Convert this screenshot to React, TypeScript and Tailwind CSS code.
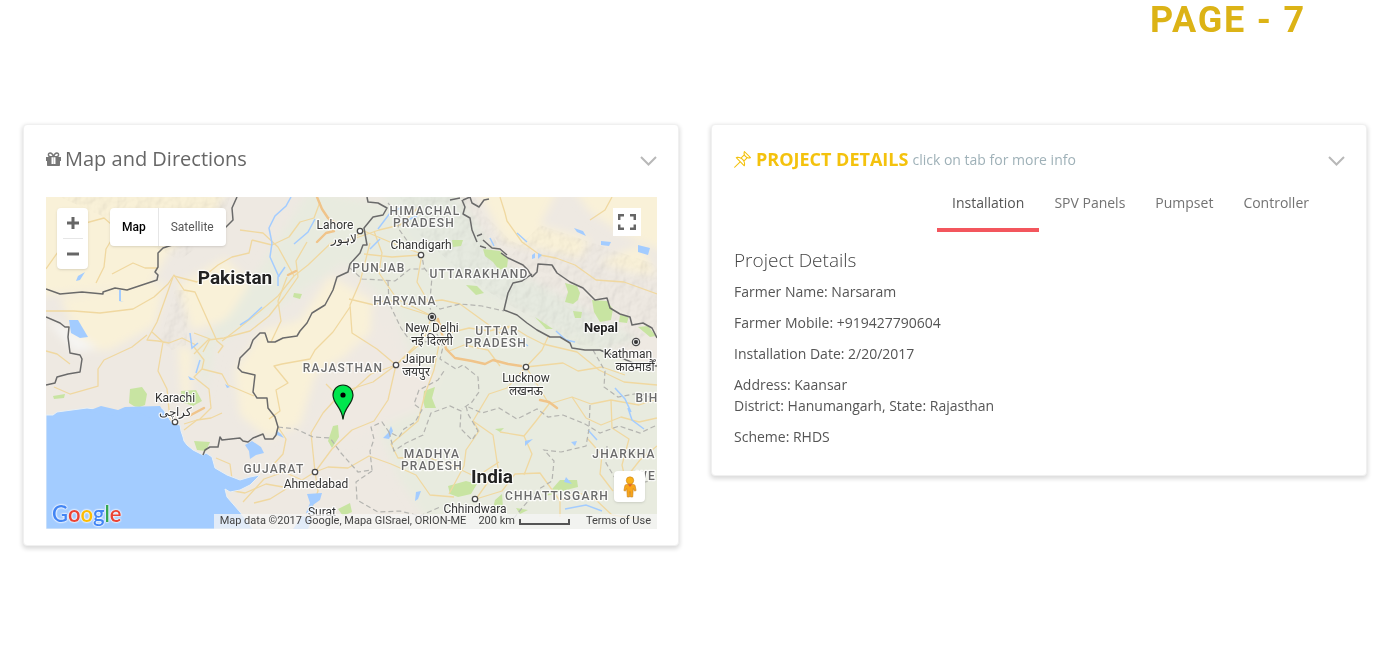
import { useState, type ReactNode } from "react";
import { SlPin } from "react-icons/sl";

const TABS = ["Installation", "SPV Panels", "Pumpset", "Controller"];

const SEA =
  "M46 415L53 415L57 412L72 410L87 408L102 410L117 412L126 411L133 407L163 409L172 423L180 425L181 431L183 437L184 441L187 445L193 450L203 455L206 453L212 457L215 468L227 475L240 480L250 477L260 475L250 485L240 490L230 492L225 489L227 497L240 512L253 529L46 529Z";

const BORDERS = [
  // Afghanistan
  "M46 289L60 294L82 292L103 294L103 292L115 288L127 290L142 285L157 280L158 275L155 272L158 267L158 253L163 248L225 228L233 220L232 208L237 197",
  // Iran
  "M46 317L60 323L65 327L69 327L68 337L70 353L80 355L82 359L80 372L68 374L57 377L55 383L46 385",
  // Pakistan and India
  "M203 455L205 450L210 447L218 447L220 437L222 440L240 438L243 441L248 442L253 438L263 434L265 439L273 439L276 435L278 427L275 417L268 408L267 398L257 398L253 392L255 375L242 372L238 368L240 358L250 348L253 340L260 333L265 333L268 342L275 342L283 338L297 336L300 331L307 323L312 313L325 305L333 290L337 277L348 272L350 264L360 253L363 245L367 245L364 228L373 217L383 215L387 208L378 203L368 202L367 197",
  // Tibet
  "M462 200L465 207L463 214L470 218L472 230L477 242M450 200L460 198M463 200L470 197L472 203L479 207L484 200L489 199",
  "M477 236L482 234M480 246L486 248M483 240L492 248L500 249L507 255M501 253L508 258L523 265L528 270L532 277",
  // Nepal
  "M532 277L537 272L538 264L552 265L557 273L570 282L583 288L595 300L607 298L610 308L620 314L630 317L632 325L643 323L652 328L657 338",
  "M532 274L522 281L513 283L508 293L504 310L517 315L527 323L537 330L550 337L560 337L570 343L572 348L585 350L600 350L607 353L620 357L635 364L657 366",
];

const STATE_LINES = [
  "M388 203L400 217L398 228L408 242L421 250L424 268L432 277L430 300L440 309L460 304L482 306L504 311",
  "M350 268L362 279L381 280L395 281L410 269L424 269",
  "M388 281L389 303L401 328L408 338L419 343L430 341L437 332L434 318L430 308",
  "M437 334L443 347L440 359L456 369L463 365L478 377L479 392L472 402L462 409",
  "M278 427L296 429L313 437L330 438L341 453L358 472L372 470L370 451L374 439L371 427L382 422L389 432L399 437L404 429L415 422L422 410L414 404L419 390L438 380L444 371",
  "M389 432L394 451L406 443L423 435L431 413L450 406L461 411L460 428L472 440L478 431L468 414L466 406L482 413L499 408L517 419L537 409L548 417L563 415L585 424L600 433L619 426L640 433L657 425",
  "M593 350L605 371L604 387L618 397L640 393L657 400M590 405L589 429L586 446L561 452L544 450L554 461L552 481L539 489L522 508L514 518",
  "M372 471L356 482L357 500L378 512L400 511L420 516L440 507M607 446L606 463L615 478L633 485L657 479",
];

const ROADS = [
  "M46 311L74 311L100 313L133 309L154 297L168 284L174 275L184 290L195 292L217 341L223 346L218 353",
  "M173 277L157 322L147 340L158 341L169 343L182 338L196 345M152 332L163 342L158 371L167 389L170 420",
  "M147 335L132 347L104 360L98 369L98 386L70 394L54 387",
  "M46 351L57 354L70 364",
  "M222 341L239 328L259 312L278 296L294 276L308 265L330 244L350 240L364 231",
  "M194 354L208 340L224 338L250 331L269 316L284 297L298 277L296 261L307 242",
  "M194 347L204 360L202 369L194 377L209 389L211 408L200 419L184 424",
  "M203 352L210 339L194 333M202 369L222 374L228 385L254 396",
  "M46 269L60 249L74 238L82 224L104 218L111 224M96 283L104 267L106 249L118 229",
  "M112 274L133 263L145 268L158 268M174 276L197 282L218 265L232 257L249 253L252 240",
  "M252 240L272 245L289 237L300 222L314 218L320 202M240 230L263 233L278 247L294 276",
  "M350 240L379 230L400 225L419 207M364 231L397 245L422 254L417 282L430 305M364 254L392 257L420 255M374 231L382 253L379 273L397 299L432 316",
  "M370 243L360 282L350 305L352 333L377 349L396 365M432 316L403 307L388 299L374 305L349 299",
  "M287 277L278 301L281 321L271 342M333 332L350 307M333 332L315 350L310 359L282 364L274 366L288 383L276 390L280 411L269 419M326 384L338 396L350 393L371 374L396 365",
  "M432 317L420 344L396 365L388 400L374 421L352 430L332 449L315 472M396 365L411 350L431 330M396 365L373 382L342 392L323 413L311 433L315 472",
  "M315 472L302 480L284 472L264 479L243 502M315 472L328 467L348 468L369 456L391 464L416 475L430 495L454 497M315 472L318 491L311 510L306 526M286 489L270 499L254 503",
  "M278 427L286 439L283 454L272 466M184 430L197 420L211 418L222 413M216 458L230 464L232 479M228 490L245 493L266 484L283 487",
  "M432 316L449 333L469 328L489 331L511 326L527 336L543 344L577 352L599 370L624 382L657 385",
  "M440 339L434 370L425 394L418 421L391 444L398 458L426 457L449 464L476 477L499 462",
  "M526 367L507 388L489 394L473 421L479 431L466 450L464 466L449 494M473 421L493 435L498 468L476 499M526 367L540 389L549 404L572 397L591 404L611 400L639 405L657 399",
  "M549 404L536 421L524 436L500 432M572 397L586 418L601 425L621 417L639 422L657 418M611 400L612 428L629 439L622 465L628 491M560 501L577 492L596 500L612 515L640 519",
  "M476 499L502 491L515 474L540 473L560 501L560 517M524 436L532 454L524 475M587 438L602 455L600 474L613 491M657 446L640 460L629 474",
  "M500 366L488 350L464 345L449 351L440 341M526 367L542 350L548 337M526 367L563 363L578 371L602 367L625 375M424 302L442 300L460 304L482 320L500 333L511 326",
  "M500 197L505 213L507 221L522 242L540 255L556 258L575 265L596 280L624 282L657 294M612 197L605 210L590 220",
];

const LAKES = [
  "M69 320L78 320L88 337L80 338L71 333Z",
  "M574 228L583 231L586 236L577 232Z",
  "M601 241L611 242L609 246L601 245Z",
  "M638 245L650 248L648 255L638 252Z",
  "M532 255L535 253L535 258L532 259ZM538 253L542 255L538 259Z",
  "M78 276L85 272L80 280L76 281ZM119 290L121 290L121 301L124 302L119 301Z",
  "M88 411L101 406L118 410L125 407L160 406L163 411L151 418L135 411L115 416Z",
  "M245 445L252 441L261 447L264 453L256 455L250 459L249 451Z",
  "M307 494L322 493L320 500L313 505L315 514L306 513L310 503Z",
  "M391 426L393 431L389 439L383 438L388 433Z",
  "M276 430L281 434L284 438L277 435Z",
  "M525 441L533 439L525 446ZM571 442L577 441L575 446ZM566 477L572 484L564 482Z",
  "M416 492L421 491L418 499L415 501ZM188 376L195 380L190 380ZM225 384L230 387L227 388Z",
];

const RIVERS = [
  "M291 197L286 206L275 216L269 228L272 243L270 257L279 277M262 307L248 320L240 325M190 333L192 348L198 343M200 360L196 373",
  "M315 219L308 232L294 244M378 229L390 213L402 207M370 249L380 239M403 222L417 216M490 238L494 246M527 242L517 233",
  "M278 286L278 277L285 267M556 331L566 340L575 342M615 388L625 399L631 412M520 340L528 346M628 408L632 420L644 429M588 430L597 440M565 509L586 505L602 511",
];

const FORESTS = [
  "M565 283L577 286L580 293L578 300L573 304L565 302L568 292Z",
  "M592 300L607 301L613 309L611 320L600 322L594 312Z",
  "M483 249L500 251L508 259L507 267L499 270L493 262L485 256ZM452 240L463 240L461 246L453 247Z",
  "M130 389L142 387L147 394L145 405L137 408L129 403ZM53 396L65 394L64 398L54 399Z",
  "M424 391L435 387L432 398L436 408L425 408L423 401Z",
  "M194 441L210 442L206 451L197 450ZM181 391L196 390L202 401L193 406L182 402Z",
  "M448 486L466 481L477 484L471 494L458 497L450 494ZM495 429L504 428L500 432ZM495 500L502 494L503 508L492 512Z",
  "M333 426L338 425L339 437L332 448L328 441ZM466 285L477 286L484 293L476 295ZM535 317L553 329L546 329Z",
  "M560 480L577 480L578 487L566 490L546 496ZM573 311L582 312L581 318L575 318ZM620 315L629 316L627 323L619 322Z",
  "M638 327L648 326L656 336L650 337ZM338 509L350 503L352 512L343 516ZM294 293L302 294L300 299L293 297ZM516 508L528 510L520 514Z",
];

type Place = { name: string; x: number; y: number };

const STATES: Place[] = [
  { name: "HIMACHAL", x: 425, y: 215 },
  { name: "PRADESH", x: 424, y: 227 },
  { name: "PUNJAB", x: 379, y: 272 },
  { name: "UTTARAKHAND", x: 479, y: 278 },
  { name: "HARYANA", x: 405, y: 305 },
  { name: "UTTAR", x: 497, y: 335 },
  { name: "PRADESH", x: 496, y: 347 },
  { name: "RAJASTHAN", x: 343, y: 372 },
  { name: "MADHYA", x: 432, y: 458 },
  { name: "PRADESH", x: 432, y: 470 },
  { name: "GUJARAT", x: 274, y: 473 },
  { name: "CHHATTISGARH", x: 557, y: 500 },
  { name: "BIH", x: 647, y: 402 },
  { name: "JHARKHA", x: 624, y: 458 },
  { name: "WE", x: 646, y: 480 },
];

const CITIES: Place[] = [
  { name: "Lahore", x: 335, y: 229 },
  { name: "لاہور", x: 344, y: 243 },
  { name: "Chandigarh", x: 421, y: 249 },
  { name: "New Delhi", x: 432, y: 332 },
  { name: "नई दिल्ली", x: 432, y: 345 },
  { name: "Jaipur", x: 419, y: 363 },
  { name: "जयपुर", x: 416, y: 376 },
  { name: "Lucknow", x: 526, y: 382 },
  { name: "लखनऊ", x: 526, y: 395 },
  { name: "Kathman", x: 628, y: 358 },
  { name: "काठमाडौँ", x: 635, y: 371 },
  { name: "Karachi", x: 175, y: 402 },
  { name: "کراچی", x: 175, y: 416 },
  { name: "Ahmedabad", x: 316, y: 488 },
  { name: "Surat", x: 322, y: 516 },
  { name: "Chhindwara", x: 475, y: 513 },
];

const COUNTRIES: Place[] = [
  { name: "Pakistan", x: 235, y: 284 },
  { name: "India", x: 492, y: 483 },
];

const TOWN_DOTS = [
  [360, 231],
  [421, 255],
  [396, 365],
  [526, 367],
  [175, 422],
  [315, 472],
  [475, 499],
];

const CAPITAL_DOTS = [
  [432, 317],
  [636, 342],
];

function MapDrawing() {
  return (
    <svg
      className="block h-full w-full font-[Roboto,'Noto_Sans',sans-serif]"
      viewBox="46 197 611 332"
      preserveAspectRatio="xMidYMid slice"
      role="img"
      aria-label="Map"
    >
      <defs>
        <filter id="soft" x="-20%" y="-20%" width="140%" height="140%">
          <feGaussianBlur stdDeviation="4" />
        </filter>
        <filter id="relief" x="0" y="0" width="100%" height="100%">
          <feTurbulence type="fractalNoise" baseFrequency="0.09 0.07" numOctaves="3" seed="4" />
          <feDiffuseLighting surfaceScale="3" lightingColor="#ffffff" result="light">
            <feDistantLight azimuth="225" elevation="60" />
          </feDiffuseLighting>
          <feComposite in="light" in2="SourceGraphic" operator="in" />
        </filter>
      </defs>
      <rect x="46" y="197" width="611" height="332" fill="#eee9e2" />

      <g filter="url(#soft)" style={{ colorInterpolationFilters: "sRGB" }}>
        <path fill="#f9f1d8" d="M30 180H230L215 215L170 250L150 285L30 296Z" />
        <path fill="#f9f1d8" d="M60 298L165 282L155 325L110 350L85 350Z" />
        <path fill="#f9f1d8" d="M178 285L225 258L262 295L235 318L192 330ZM178 345L192 350L190 400L182 398Z" />
        <path fill="#f9f1d8" d="M262 330L300 320L330 276L372 300L370 340L315 375L300 425L268 438L240 415L235 370Z" />
        <path fill="#e8ebdf" d="M310 190L385 205L430 255L510 310L670 375V540H440L400 480L380 430L420 380L395 310L345 262L262 318L215 345L205 395L194 345L230 315Z" />
        <path fill="#f9f1d8" d="M475 185H560L540 225L590 240L580 258L505 242Z" />
        <path fill="#f9f1d8" d="M570 185H670V255L620 232L590 212ZM600 262L640 245L657 275L630 272Z" />
        <path fill="#f6f5f3" d="M46 319L66 327L98 348L75 352Z" />
        <path fill="#e6eae0" d="M380 190H455L500 262L540 285L640 340L600 348L520 312L470 285L410 240Z" />
        <path fill="#efe9e2" d="M350 350L385 320L400 360L440 372L420 410L350 440L310 430Z" />
      </g>

      <g className="mix-blend-multiply" opacity="0.18" filter="url(#relief)">
        <path d="M400 197H475L500 250L530 278L555 275L600 305L650 330L630 350L580 345L510 305L470 280L420 235Z" />
        <path d="M505 262L540 225L657 265V330L610 305L570 280ZM475 205L510 240L540 255L500 245Z" />
        <path d="M60 197H230L220 230L180 260L150 245L100 215ZM175 290L190 290L186 345L172 350L160 340Z" />
      </g>

      <g fill="#c8e4a2">
        {FORESTS.map((d) => (
          <path key={d} d={d} />
        ))}
      </g>
      <g fill="none" stroke="#f0d8a0" strokeWidth="1.3" strokeLinejoin="round">
        {ROADS.map((d) => (
          <path key={d} d={d} />
        ))}
      </g>
      <g fill="none" stroke="#f0c48a" strokeWidth="2.4" strokeLinecap="round" strokeLinejoin="round">
        <path d="M438 319L446 349L455 358L472 361L485 364L493 360L508 364L521 366" />
        <path d="M317 197L322 209L328 218L338 225M317 242L326 233L334 231M288 275L296 271" />
        <path d="M540 400L549 402L557 408M189 416L204 408" />
      </g>
      <path d={SEA} fill="#a3ccff" stroke="#e9f0f5" strokeWidth="1" />
      <path d="M293 529L302 516L312 518L308 529Z" fill="#a3ccff" />
      <g fill="#a3ccff">
        {LAKES.map((d) => (
          <path key={d} d={d} />
        ))}
      </g>
      <g fill="none" stroke="#a3ccff" strokeWidth="1.5">
        {RIVERS.map((d) => (
          <path key={d} d={d} />
        ))}
      </g>
      <g fill="none" stroke="#b4b4b0" strokeWidth="1.2" strokeDasharray="5 3">
        {STATE_LINES.map((d) => (
          <path key={d} d={d} />
        ))}
      </g>
      <g fill="none" stroke="#6a6a6a" strokeWidth="1.5" strokeLinejoin="round">
        {BORDERS.map((d) => (
          <path key={d} d={d} />
        ))}
      </g>

      <g fill="#fff" stroke="#4a4a4a" strokeWidth="1.3">
        {TOWN_DOTS.map(([x, y]) => (
          <circle key={x} cx={x} cy={y} r="2.7" />
        ))}
        {CAPITAL_DOTS.map(([x, y]) => (
          <g key={x}>
            <circle cx={x} cy={y} r="3.6" />
            <circle cx={x} cy={y} r="1.5" fill="#222" />
          </g>
        ))}
      </g>

      <g textAnchor="middle" stroke="#fff" strokeOpacity="0.85" strokeWidth="2.5" paintOrder="stroke" strokeLinejoin="round">
        <g className="text-[12px] font-medium tracking-widest" fill="#6b6b6b">
          {STATES.map((s) => (
            <text key={s.name + s.y} x={s.x} y={s.y}>
              {s.name}
            </text>
          ))}
        </g>
        <g className="text-[12px]" fill="#333">
          {CITIES.map((c) => (
            <text key={c.name} x={c.x} y={c.y}>
              {c.name}
            </text>
          ))}
        </g>
        <g className="text-[19px] font-bold" fill="#222">
          {COUNTRIES.map((c) => (
            <text key={c.name} x={c.x} y={c.y}>
              {c.name}
            </text>
          ))}
        </g>
        <text className="text-[13px] font-bold" fill="#222" x="601" y="332">
          Nepal
        </text>
      </g>

      <path
        d="M343 419.5C342 407 333 404 333 395A10 10 0 0 1 353 395C353 404 344 407 343 419.5Z"
        fill="#00e64d"
        stroke="#0b2b12"
        strokeWidth="1.2"
      />
      <circle cx="343" cy="395" r="2.6" fill="#000" />
    </svg>
  );
}

function GiftIcon() {
  return (
    <svg className="h-[14px] w-[15px]" viewBox="0 0 15 14" aria-hidden="true">
      <path
        d="M7.5 4.6C6.6 2 5.5 1 4.2 1a1.8 1.8 0 0 0 0 3.6zM7.5 4.6C8.4 2 9.5 1 10.8 1a1.8 1.8 0 0 1 0 3.6z"
        fill="none"
        stroke="#777"
        strokeWidth="1.4"
      />
      <path fill="#777" d="M0 5h5.5v7H9.500V5H15v4h-1v4c0 .6-.4 1-1 1H2c-.6 0-1-.4-1-1V9H0z" />
      <path fill="#777" d="M7 5h1v7H7z" opacity="0.3" />
    </svg>
  );
}

function Card({ title, children }: { title: ReactNode; children: ReactNode }) {
  return (
    <section className="rounded-sm border border-[#f0f0f0] bg-white pt-[9px] pr-[21px] pb-4 pl-[22px] shadow-[0_2px_4px_1px_rgba(0,0,0,0.14)]">
      <header className="flex h-[50px] items-center justify-between">
        {title}
        <button type="button" aria-label="Collapse" className="mt-1 cursor-pointer">
          <svg className="h-3 w-[17px]" viewBox="0 0 17 12" fill="none" stroke="#b8b8b8" strokeWidth="2">
            <path d="M1 2L8.5 9.5L16 2" />
          </svg>
        </button>
      </header>
      {children}
    </section>
  );
}

function MapCard() {
  return (
    <Card
      title={
        <h2 className="flex items-center gap-1 text-[20px] text-[#666]">
          <GiftIcon />
          Map and Directions
        </h2>
      }
    >
      <div className="relative mt-[13px] h-[332px] overflow-hidden font-[Roboto,sans-serif]">
        <MapDrawing />

        <div className="absolute top-[11px] left-[11px] flex w-[31px] flex-col items-center rounded-sm bg-white shadow">
          <button type="button" aria-label="Zoom in" className="flex h-[30px] w-full items-center justify-center">
            <svg className="size-3" viewBox="0 0 12 12" stroke="#666" strokeWidth="3">
              <path d="M0 6H12M6 0V12" />
            </svg>
          </button>
          <span className="h-px w-5 bg-[#e6e6e6]" />
          <button type="button" aria-label="Zoom out" className="flex h-[30px] w-full items-center justify-center">
            <svg className="size-3" viewBox="0 0 12 12" stroke="#666" strokeWidth="3">
              <path d="M0 6H12" />
            </svg>
          </button>
        </div>

        <div className="absolute top-[11px] left-16 flex h-[38px] rounded-sm bg-white text-[12px] shadow">
          <button type="button" className="border-r border-[#e6e6e6] px-3 font-medium text-black">
            Map
          </button>
          <button type="button" className="px-3 text-[#565656]">
            Satellite
          </button>
        </div>

        <button
          type="button"
          aria-label="Toggle fullscreen"
          className="absolute top-[11px] right-4 flex size-7 items-center justify-center bg-white"
        >
          <svg className="h-4 w-[18px]" viewBox="0 0 18 16" fill="none" stroke="#666" strokeWidth="2.5">
            <path d="M1.2 6V1.2H6M12 1.2H16.8V6M16.8 10.5V14.8H12M6 14.8H1.2V10.5" />
          </svg>
        </button>

        <button
          type="button"
          aria-label="Street View"
          className="absolute right-3 bottom-[27px] flex size-[31px] items-center justify-center rounded-sm bg-white shadow"
        >
          <svg className="h-[22px] w-[14px]" viewBox="0 0 14 22">
            <path
              d="M3.5 8.5h7c1 0 1.5.7 1.7 1.5l.9 4.5-1.5.6-1.3-2.6-.6 8.5H7.5L7 15.5l-.5 5.5H4.3l-.6-8.5-1.3 2.6-1.5-.6.9-4.5c.2-.8.7-1.5 1.7-1.5z"
              fill="#f9a61a"
              stroke="#c7801a"
              strokeWidth="0.6"
            />
            <circle cx="7" cy="4.5" r="3.7" fill="#fbb117" stroke="#c7801a" strokeWidth="0.6" />
            <path d="M4.8 8.3L7 11L9.2 8.3Z" fill="#e0622a" />
          </svg>
        </button>

        <a
          href="#google"
          className="absolute bottom-[1px] left-[6px] font-[Lato,sans-serif] text-[22px] leading-7 font-semibold [text-shadow:0_0_2px_#fff,0_0_2px_#fff,0_0_2px_#fff]"
        >
          <span className="text-[#4285f4]">G</span>
          <span className="text-[#ea4335]">o</span>
          <span className="text-[#fbbc05]">o</span>
          <span className="text-[#4285f4]">g</span>
          <span className="text-[#34a853]">l</span>
          <span className="text-[#ea4335]">e</span>
        </a>

        <div className="absolute right-0 bottom-0 flex h-[15px] items-center bg-[#f5f5f5]/75 px-[6px] text-[11px] text-[#444]">
          <span>Map data ©2017 Google, Mapa GISrael, ORION-ME</span>
          <span className="ml-3">200 km</span>
          <span className="ml-1 h-[6px] w-[51px] border-2 border-t-0 border-[#555]" />
          <a href="#terms" className="ml-4">
            Terms of Use
          </a>
        </div>
      </div>
    </Card>
  );
}

function ProjectCard() {
  const [active, setActive] = useState(TABS[0]);

  return (
    <Card
      title={
        <h2 className="flex items-center text-[18px] font-bold text-[#f4c20d]">
          <SlPin className="mr-[5px] size-[17px]" />
          PROJECT DETAILS
          <small className="ml-1 text-[14px] font-normal text-[#9fb1b8]">click on tab for more info</small>
        </h2>
      }
    >
      <div role="tablist" className="flex justify-end pr-[21px] text-[14px]">
        {TABS.map((tab) => (
          <button
            key={tab}
            type="button"
            role="tab"
            aria-selected={tab === active}
            onClick={() => setActive(tab)}
            className={
              tab === active
                ? "h-12 border-b-4 border-[#f3565d] px-[15px] pb-2 text-[#555]"
                : "h-12 border-b-4 border-transparent px-[15px] pb-2 text-[#737373]"
            }
          >
            {tab}
          </button>
        ))}
      </div>
      <div role="tabpanel" className="space-y-[10px] pt-[17px] pb-3 text-[14px] leading-[21px] text-[#555]">
        <h3 className="text-[19px] leading-[22px] font-light text-[#444]">Project Details</h3>
        <p>Farmer Name: Narsaram</p>
        <p>Farmer Mobile: +919427790604</p>
        <p>Installation Date: 2/20/2017</p>
        <p>
          Address: Kaansar
          <br />
          District: Hanumangarh, State: Rajasthan
        </p>
        <p>Scheme: RHDS</p>
      </div>
    </Card>
  );
}

export default function App() {
  return (
    <div className="min-h-screen bg-white font-['Open_Sans',sans-serif]">
      <h1 className="pr-[81px] text-right font-[Roboto,sans-serif] text-[36px] leading-10 font-bold tracking-wider text-[#dcb316]">
        PAGE - 7
      </h1>
      <main className="mt-[84px] grid grid-cols-2 items-start gap-8 pr-5 pl-[23px]">
        <MapCard />
        <ProjectCard />
      </main>
    </div>
  );
}
